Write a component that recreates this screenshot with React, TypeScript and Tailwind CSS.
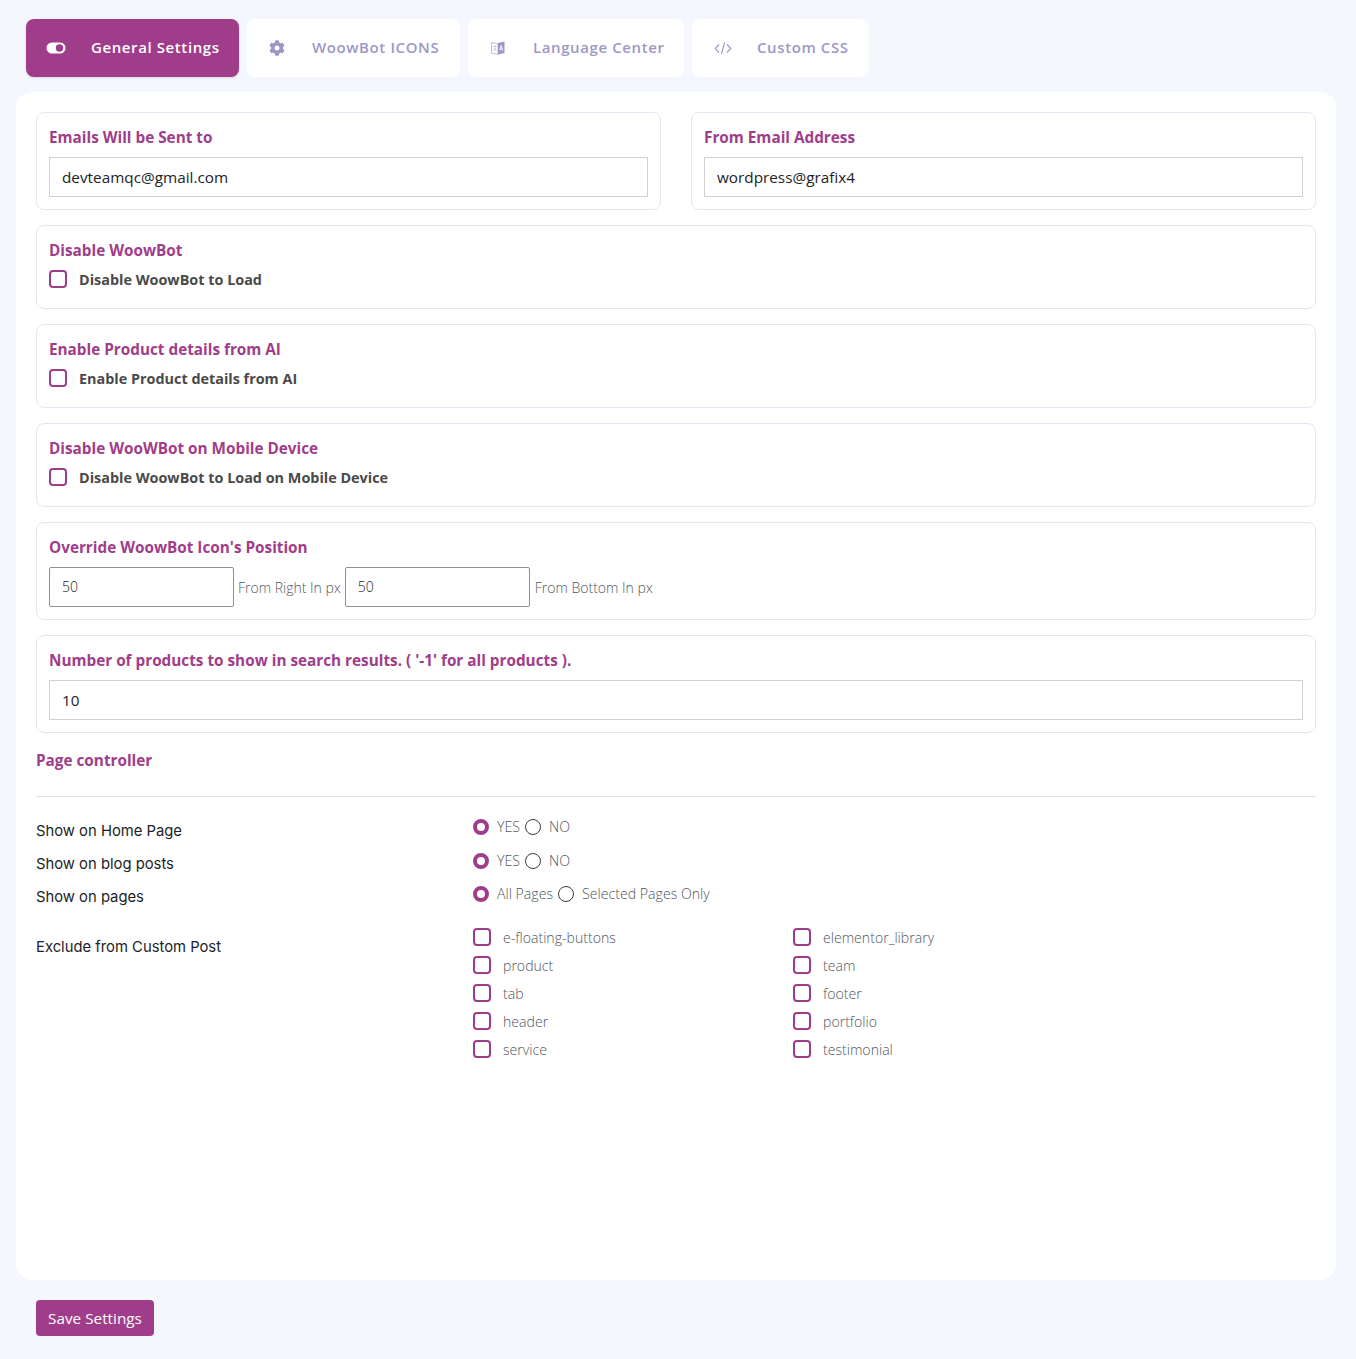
import { ReactNode } from 'react';

const purple = 'text-[#a03d8a]';

function ToggleIcon() {
  return (
    <svg width="20" height="12" viewBox="0 0 20 12">
      <rect x="0.5" y="0.5" width="19" height="11" rx="5.5" fill="#fff" />
      <circle cx="13.5" cy="6" r="3.7" fill="#a03d8a" />
    </svg>
  );
}

function GearIcon() {
  return (
    <svg width="16" height="16" viewBox="0 0 512 512" fill="#9d97c6">
      <path d="M487.4 315.7l-42.6-24.6c4.3-23.2 4.3-47 0-70.2l42.6-24.6c4.9-2.8 7.1-8.6 5.5-14-11.1-35.6-30-67.8-54.7-94.6-3.8-4.1-10-5.1-14.8-2.3L380.8 110c-17.9-15.4-38.5-27.3-60.8-35.1V25.8c0-5.6-3.9-10.5-9.4-11.7-36.7-8.2-74.3-7.8-109.2 0-5.5 1.2-9.4 6.1-9.4 11.7V75c-22.2 7.9-42.8 19.8-60.8 35.1L88.7 85.5c-4.9-2.8-11-1.9-14.8 2.3-24.7 26.7-43.6 58.9-54.7 94.6-1.7 5.4.6 11.2 5.5 14L67.3 221c-4.3 23.2-4.3 47 0 70.2l-42.6 24.6c-4.9 2.8-7.1 8.6-5.5 14 11.1 35.6 30 67.8 54.7 94.6 3.8 4.1 10 5.1 14.8 2.3l42.6-24.6c17.9 15.4 38.5 27.3 60.8 35.1v49.2c0 5.6 3.9 10.5 9.4 11.7 36.7 8.2 74.3 7.8 109.2 0 5.5-1.2 9.4-6.1 9.4-11.7v-49.2c22.2-7.9 42.8-19.8 60.8-35.1l42.6 24.6c4.9 2.8 11 1.9 14.8-2.3 24.7-26.7 43.6-58.9 54.7-94.6 1.5-5.5-.7-11.3-5.6-14.1zM256 336c-44.1 0-80-35.9-80-80s35.9-80 80-80 80 35.9 80 80-35.9 80-80 80z" />
    </svg>
  );
}

function LanguageIcon() {
  return (
    <svg width="16" height="16" viewBox="0 0 16 16">
      <path d="M1.5 2.5 L8 4 V14.5 L1.5 13 Z" fill="#fff" stroke="#b9b5d8" strokeWidth="0.9" />
      <path d="M8 3 L14.5 1.5 V13 L8 14.5 Z" fill="#9d97c6" />
      <path d="M9.8 10.5 L11.2 5.5 L12.7 10.5 M10.4 9 H12.1" fill="none" stroke="#fff" strokeWidth="0.9" />
      <path d="M3 6.5 H6.5 M4.8 5.5 V7 M6 7 C5.5 9 4.5 10 3.2 10.5 M4 8 C4.5 9.2 5.5 10 6.6 10.5" fill="none" stroke="#b9b5d8" strokeWidth="0.7" />
    </svg>
  );
}

function CodeIcon() {
  return (
    <svg width="18" height="14" viewBox="0 0 18 14" fill="none" stroke="#9d97c6" strokeWidth="1.1">
      <path d="M5 3.5 L1.2 7.5 L5 11.5 M13 3.5 L16.8 7.5 L13 11.5 M10.6 1.5 L7.4 13" />
    </svg>
  );
}

function Tab({ icon, label, active, width }: { icon: ReactNode; label: string; active?: boolean; width: string }) {
  return (
    <a
      className={`flex h-[58px] items-center rounded-lg pl-5 text-[15px] font-semibold tracking-[0.6px] ${width} ${
        active ? 'bg-[#a03d8a] text-white shadow-sm' : 'bg-white text-[#9d97c6]'
      }`}
    >
      <span className={`flex w-[45px] items-center ${active ? '' : 'pb-px pl-[2px]'}`}>{icon}</span>
      <span className="pb-[2px]">{label}</span>
    </a>
  );
}

function Heading({ children }: { children: ReactNode }) {
  return <div className={`text-[15.3px] leading-[24px] font-bold ${purple}`}>{children}</div>;
}

function TextBox({ value, className = '' }: { value: string; className?: string }) {
  return <div className={`flex h-10 items-center border px-3 text-[#1d2327] ${className}`}>{value}</div>;
}

function Card({ children, className = '' }: { children: ReactNode; className?: string }) {
  return <div className={`rounded-lg border border-[#e6e6f2] px-3 pt-3 ${className}`}>{children}</div>;
}

function CheckBox() {
  return <span className="block h-[18px] w-[18px] shrink-0 rounded-[4px] border-2 border-[#a03d8a] bg-white" />;
}

function CheckCard({ title, label }: { title: string; label: string }) {
  return (
    <Card className="h-[84px]">
      <Heading>{title}</Heading>
      <div className="mt-[6px] flex items-center gap-3 text-[14.4px] font-bold text-[#4a4a4a]">
        <CheckBox />
        <span className="pt-px">{label}</span>
      </div>
    </Card>
  );
}

function Radio({ on }: { on?: boolean }) {
  return on ? (
    <span className="block h-4 w-4 shrink-0 rounded-full border-[4px] border-[#a03d8a] bg-white" />
  ) : (
    <span className="block h-4 w-4 shrink-0 rounded-full border border-[#3c3c3c] bg-white" />
  );
}

function RadioRow({ yes, no, className = '' }: { yes: string; no: string; className?: string }) {
  return (
    <div className={`flex h-6 items-center text-[14.15px] font-light text-[#50575e] ${className}`}>
      <Radio on />
      <span className="mr-[5px] ml-2">{yes}</span>
      <Radio />
      <span className="ml-2">{no}</span>
    </div>
  );
}

function PostCheck({ label }: { label: string }) {
  return (
    <div className="flex h-7 items-center gap-3 text-[14.1px] font-light text-[#50575e]">
      <CheckBox />
      <span className="pt-[2px]">{label}</span>
    </div>
  );
}

const leftPosts = ['e-floating-buttons', 'product', 'tab', 'header', 'service'];
const rightPosts = ['elementor_library', 'team', 'footer', 'portfolio', 'testimonial'];

export default function App() {
  return (
    <div className="min-h-[1359px] bg-[#f4f7fe] font-['Open_Sans',sans-serif]">
      <nav className="flex gap-2 pt-[19px] pl-[26px]">
        <Tab active icon={<ToggleIcon />} label="General Settings" width="w-[213px]" />
        <Tab icon={<GearIcon />} label="WoowBot ICONS" width="w-[213px]" />
        <Tab icon={<LanguageIcon />} label="Language Center" width="w-[216px]" />
        <Tab icon={<CodeIcon />} label="Custom CSS" width="w-[177px]" />
      </nav>

      <main className="mt-[15px] mr-5 ml-4 h-[1188px] rounded-2xl bg-white px-5 pt-5">
        <div className="grid grid-cols-[625px_625px] gap-[30px]">
          <Card className="h-[98px]">
            <Heading>Emails Will be Sent to</Heading>
            <TextBox value="devteamqc@gmail.com" className="mt-2 border-[#d0d0d8] text-[15.3px]" />
          </Card>
          <Card className="h-[98px]">
            <Heading>From Email Address</Heading>
            <TextBox value="wordpress@grafix4" className="mt-2 border-[#d0d0d8] text-[15.3px]" />
          </Card>
        </div>

        <div className="mt-[15px] flex flex-col gap-[15px]">
          <CheckCard title="Disable WoowBot" label="Disable WoowBot to Load" />
          <CheckCard title="Enable Product details from AI" label="Enable Product details from AI" />
          <CheckCard title="Disable WooWBot on Mobile Device" label="Disable WoowBot to Load on Mobile Device" />
          <Card className="h-[98px]">
            <Heading>Override WoowBot Icon's Position</Heading>
            <div className="mt-2 flex items-center text-[14px] font-light text-[#50575e]">
              <TextBox value="50" className="w-[185px] rounded-[2px] border-[#8c8f94] pb-px text-[14px]" />
              <span className="mx-1">From Right In px</span>
              <TextBox value="50" className="w-[185px] rounded-[2px] border-[#8c8f94] pb-px text-[14px]" />
              <span className="ml-[5px]">From Bottom In px</span>
            </div>
          </Card>
          <Card className="h-[98px]">
            <Heading>Number of products to show in search results. ( '-1' for all products ).</Heading>
            <TextBox value="10" className="mt-2 border-[#d0d0d8] text-[15.3px]" />
          </Card>
        </div>

        <div className={`mt-[15px] text-[15.3px] leading-6 font-bold ${purple}`}>Page controller</div>
        <hr className="mt-6 border-[#e2e2e2]" />

        <div className="mt-[17px] flex">
          <div className="w-[437px] pt-px font-['Inter',sans-serif] text-[14.8px] text-[#1d2327]">
            <div className="flex h-[33px] items-center">Show on Home Page</div>
            <div className="flex h-[33px] items-center">Show on blog posts</div>
            <div className="flex h-[33px] items-center">Show on pages</div>
            <div className="mt-[21px] flex h-6 items-center">Exclude from Custom Post</div>
          </div>
          <div>
            <div className="pt-px">
              <RadioRow yes="YES" no="NO" />
              <RadioRow yes="YES" no="NO" className="mt-[10px]" />
              <RadioRow yes="All Pages" no="Selected Pages Only" className="mt-[9px]" />
            </div>
            <div className="mt-[17px] flex">
              <div className="w-[320px]">
                {leftPosts.map((p) => (
                  <PostCheck key={p} label={p} />
                ))}
              </div>
              <div>
                {rightPosts.map((p) => (
                  <PostCheck key={p} label={p} />
                ))}
              </div>
            </div>
          </div>
        </div>
      </main>

      <button className="mt-5 ml-9 flex h-9 w-[118px] items-center justify-center rounded bg-[#a03d8a] text-[15.3px] text-white">
        Save Settings
      </button>
    </div>
  );
}
